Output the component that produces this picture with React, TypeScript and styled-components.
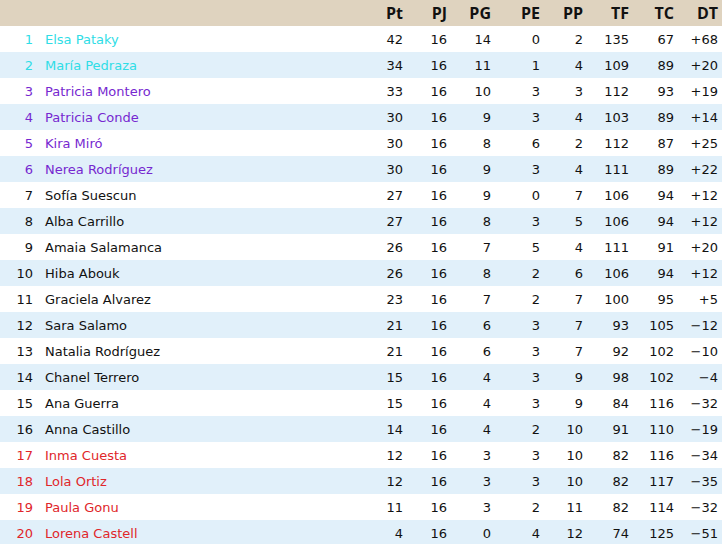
import React from "react";
import styled, { createGlobalStyle } from "styled-components";

type Zone = "champion" | "europe" | "none" | "relegation";

interface Player {
  name: string;
  pt: number;
  pj: number;
  pg: number;
  pe: number;
  pp: number;
  tf: number;
  tc: number;
  zone: Zone;
}

const players: Player[] = [
  { name: "Elsa Pataky", pt: 42, pj: 16, pg: 14, pe: 0, pp: 2, tf: 135, tc: 67, zone: "champion" },
  { name: "María Pedraza", pt: 34, pj: 16, pg: 11, pe: 1, pp: 4, tf: 109, tc: 89, zone: "champion" },
  { name: "Patricia Montero", pt: 33, pj: 16, pg: 10, pe: 3, pp: 3, tf: 112, tc: 93, zone: "europe" },
  { name: "Patricia Conde", pt: 30, pj: 16, pg: 9, pe: 3, pp: 4, tf: 103, tc: 89, zone: "europe" },
  { name: "Kira Miró", pt: 30, pj: 16, pg: 8, pe: 6, pp: 2, tf: 112, tc: 87, zone: "europe" },
  { name: "Nerea Rodríguez", pt: 30, pj: 16, pg: 9, pe: 3, pp: 4, tf: 111, tc: 89, zone: "europe" },
  { name: "Sofía Suescun", pt: 27, pj: 16, pg: 9, pe: 0, pp: 7, tf: 106, tc: 94, zone: "none" },
  { name: "Alba Carrillo", pt: 27, pj: 16, pg: 8, pe: 3, pp: 5, tf: 106, tc: 94, zone: "none" },
  { name: "Amaia Salamanca", pt: 26, pj: 16, pg: 7, pe: 5, pp: 4, tf: 111, tc: 91, zone: "none" },
  { name: "Hiba Abouk", pt: 26, pj: 16, pg: 8, pe: 2, pp: 6, tf: 106, tc: 94, zone: "none" },
  { name: "Graciela Alvarez", pt: 23, pj: 16, pg: 7, pe: 2, pp: 7, tf: 100, tc: 95, zone: "none" },
  { name: "Sara Salamo", pt: 21, pj: 16, pg: 6, pe: 3, pp: 7, tf: 93, tc: 105, zone: "none" },
  { name: "Natalia Rodríguez", pt: 21, pj: 16, pg: 6, pe: 3, pp: 7, tf: 92, tc: 102, zone: "none" },
  { name: "Chanel Terrero", pt: 15, pj: 16, pg: 4, pe: 3, pp: 9, tf: 98, tc: 102, zone: "none" },
  { name: "Ana Guerra", pt: 15, pj: 16, pg: 4, pe: 3, pp: 9, tf: 84, tc: 116, zone: "none" },
  { name: "Anna Castillo", pt: 14, pj: 16, pg: 4, pe: 2, pp: 10, tf: 91, tc: 110, zone: "none" },
  { name: "Inma Cuesta", pt: 12, pj: 16, pg: 3, pe: 3, pp: 10, tf: 82, tc: 116, zone: "relegation" },
  { name: "Lola Ortiz", pt: 12, pj: 16, pg: 3, pe: 3, pp: 10, tf: 82, tc: 117, zone: "relegation" },
  { name: "Paula Gonu", pt: 11, pj: 16, pg: 3, pe: 2, pp: 11, tf: 82, tc: 114, zone: "relegation" },
  { name: "Lorena Castell", pt: 4, pj: 16, pg: 0, pe: 4, pp: 12, tf: 74, tc: 125, zone: "relegation" },
];

const zoneColors: Record<Zone, string> = {
  champion: "#2fdde6",
  europe: "#7628d0",
  none: "#111111",
  relegation: "#e0262a",
};

const GlobalStyle = createGlobalStyle`
  html, body {
    margin: 0;
    padding: 0;
    background: #ffffff;
  }
  body {
    font-family: "DejaVu Sans", Verdana, sans-serif;
  }
`;

// rank | gap | name | Pt PJ PG PE PP TF TC DT
const columns = "32px 14px 317px 40px 44px 44px 49px 43px 46px 45px 44px";

const Table = styled.div`
  width: 722px;
  overflow: hidden;
`;

const HeaderRow = styled.div`
  display: grid;
  grid-template-columns: ${columns};
  padding-right: 4px;
  height: 26px;
  align-items: center;
  background: #dfd3bf;
  font-family: "Open Sans", "DejaVu Sans", sans-serif;
  font-weight: 700;
  font-size: 16px;
  color: #111111;
`;

const Row = styled.div<{ $striped: boolean }>`
  display: grid;
  grid-template-columns: ${columns};
  padding-right: 4px;
  height: 26px;
  align-items: center;
  background: ${({ $striped }) => ($striped ? "#e1f0fa" : "#ffffff")};
  font-size: 13px;
  color: #111111;
`;

const Num = styled.span`
  text-align: right;
  white-space: nowrap;
`;

const Rank = styled(Num)<{ $zone: Zone }>`
  color: ${({ $zone }) => zoneColors[$zone]};
  margin-right: -1px;
`;

const Name = styled.span<{ $zone: Zone }>`
  color: ${({ $zone }) => zoneColors[$zone]};
  white-space: nowrap;
  margin-left: -1px;
`;

const headers = ["Pt", "PJ", "PG", "PE", "PP", "TF", "TC", "DT"];

const formatDiff = (d: number) => (d > 0 ? `+${d}` : d < 0 ? `\u2212${-d}` : "0");

const App: React.FC = () => (
  <>
    <GlobalStyle />
    <Table>
      <HeaderRow>
        <span />
        <span />
        <span />
        {headers.map((h) => (
          <Num key={h}>{h}</Num>
        ))}
      </HeaderRow>
      {players.map((p, i) => (
        <Row key={p.name} $striped={i % 2 === 1}>
          <Rank $zone={p.zone}>{i + 1}</Rank>
          <span />
          <Name $zone={p.zone}>{p.name}</Name>
          <Num>{p.pt}</Num>
          <Num>{p.pj}</Num>
          <Num>{p.pg}</Num>
          <Num>{p.pe}</Num>
          <Num>{p.pp}</Num>
          <Num>{p.tf}</Num>
          <Num>{p.tc}</Num>
          <Num>{formatDiff(p.tf - p.tc)}</Num>
        </Row>
      ))}
    </Table>
  </>
);

export default App;
